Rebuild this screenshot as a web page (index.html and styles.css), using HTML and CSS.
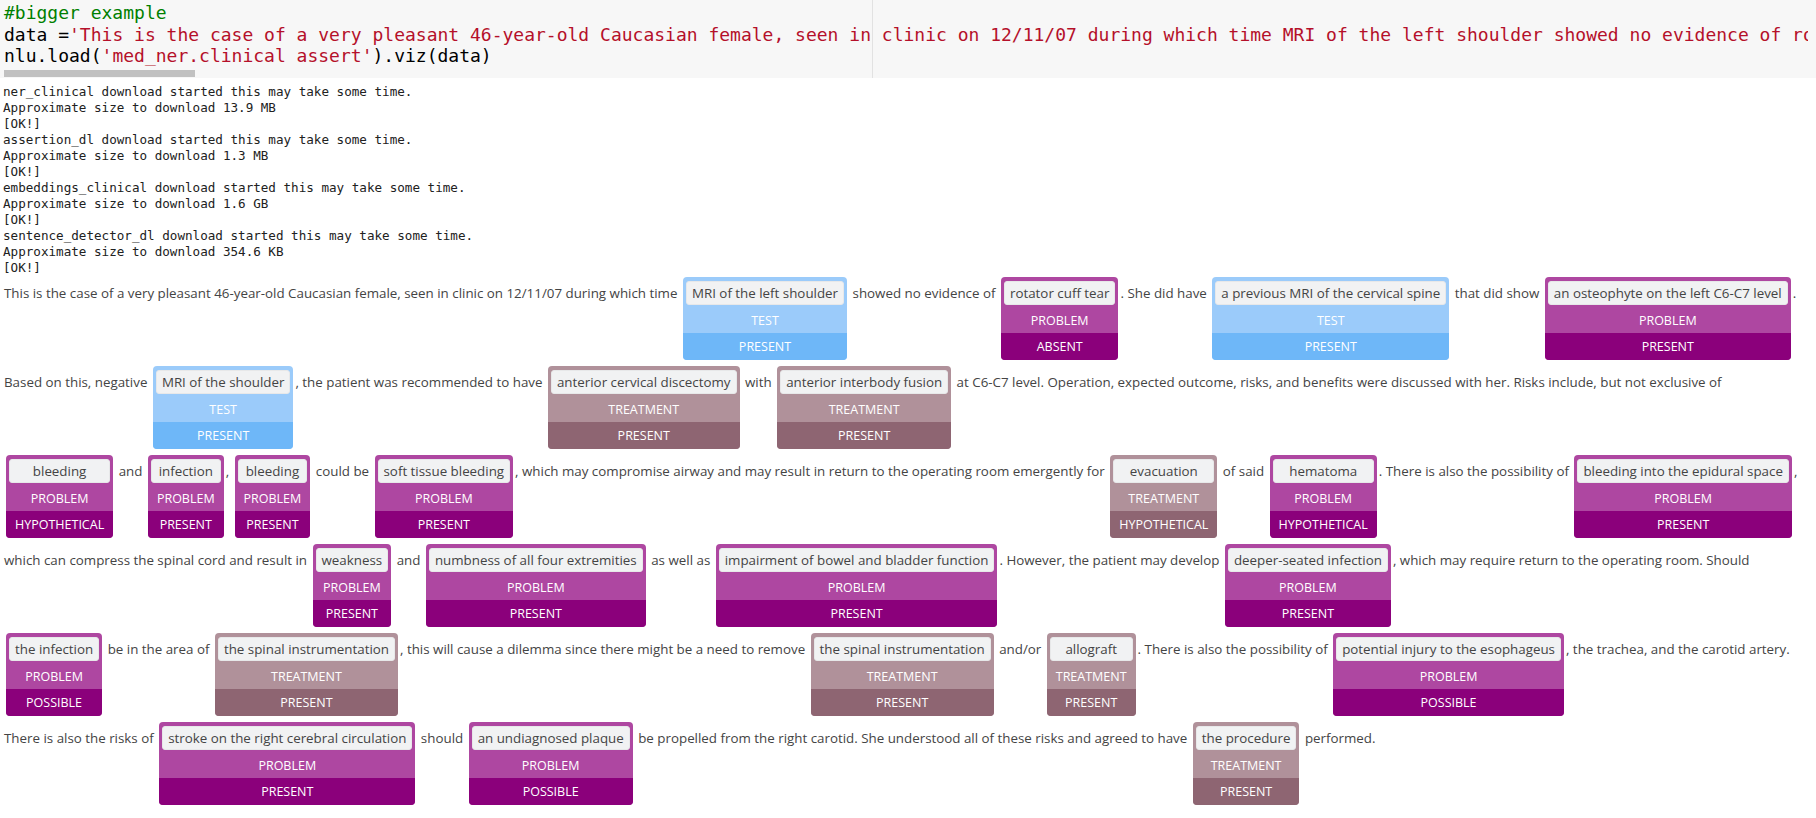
FILE: index.html
```html
<!DOCTYPE html>
<html>
<head>
<meta charset="utf-8">
<link rel="stylesheet" href="styles.css">
</head>
<body>
<div class="cell">
  <div class="code">
    <div class="cl"><span class="cm">#bigger example</span></div>
    <div class="cl">data =<span class="st">'This is the case of a very pleasant 46-year-old Caucasian female, seen in clinic on 12/11/07 during which time MRI of the left shoulder showed no evidence of rotator cuff tear. She did have a previous MRI of the cervical spine that did show an osteophyte on the left C6-C7 level.'</span></div>
    <div class="cl">nlu.load(<span class="st">'med_ner.clinical assert'</span>).viz(data)</div>
  </div>
  <div class="ruler"></div>
  <div class="scroll"><div class="thumb"></div></div>
</div>
<pre class="out">ner_clinical download started this may take some time.
Approximate size to download 13.9 MB
[OK!]
assertion_dl download started this may take some time.
Approximate size to download 1.3 MB
[OK!]
embeddings_clinical download started this may take some time.
Approximate size to download 1.6 GB
[OK!]
sentence_detector_dl download started this may take some time.
Approximate size to download 354.6 KB
[OK!]</pre>
<div class="viz">
<div class="line">This is the case of a very pleasant 46-year-old Caucasian female, seen in clinic on 12/11/07 during which time <span class="ent test"><span class="name">MRI of the left shoulder</span><span class="type">Test</span><span class="res">Present</span></span> showed no evidence of <span class="ent prob"><span class="name">rotator cuff tear</span><span class="type">Problem</span><span class="res">Absent</span></span>. She did have <span class="ent test"><span class="name">a previous MRI of the cervical spine</span><span class="type">Test</span><span class="res">Present</span></span> that did show <span class="ent prob"><span class="name">an osteophyte on the left C6-C7 level</span><span class="type">Problem</span><span class="res">Present</span></span>.</div>
<div class="line">Based on this, negative <span class="ent test"><span class="name">MRI of the shoulder</span><span class="type">Test</span><span class="res">Present</span></span>, the patient was recommended to have <span class="ent treat"><span class="name">anterior cervical discectomy</span><span class="type">Treatment</span><span class="res">Present</span></span> with <span class="ent treat"><span class="name">anterior interbody fusion</span><span class="type">Treatment</span><span class="res">Present</span></span> at C6-C7 level. Operation, expected outcome, risks, and benefits were discussed with her. Risks include, but not exclusive of</div>
<div class="line"><span class="ent prob"><span class="name">bleeding</span><span class="type">Problem</span><span class="res">Hypothetical</span></span> and <span class="ent prob"><span class="name">infection</span><span class="type">Problem</span><span class="res">Present</span></span>, <span class="ent prob"><span class="name">bleeding</span><span class="type">Problem</span><span class="res">Present</span></span> could be <span class="ent prob"><span class="name">soft tissue bleeding</span><span class="type">Problem</span><span class="res">Present</span></span>, which may compromise airway and may result in return to the operating room emergently for <span class="ent treat"><span class="name">evacuation</span><span class="type">Treatment</span><span class="res">Hypothetical</span></span> of said <span class="ent prob"><span class="name">hematoma</span><span class="type">Problem</span><span class="res">Hypothetical</span></span>. There is also the possibility of <span class="ent prob"><span class="name">bleeding into the epidural space</span><span class="type">Problem</span><span class="res">Present</span></span>,</div>
<div class="line">which can compress the spinal cord and result in <span class="ent prob"><span class="name">weakness</span><span class="type">Problem</span><span class="res">Present</span></span> and <span class="ent prob"><span class="name">numbness of all four extremities</span><span class="type">Problem</span><span class="res">Present</span></span> as well as <span class="ent prob"><span class="name">impairment of bowel and bladder function</span><span class="type">Problem</span><span class="res">Present</span></span>. However, the patient may develop <span class="ent prob"><span class="name">deeper-seated infection</span><span class="type">Problem</span><span class="res">Present</span></span>, which may require return to the operating room. Should</div>
<div class="line"><span class="ent prob"><span class="name">the infection</span><span class="type">Problem</span><span class="res">Possible</span></span> be in the area of <span class="ent treat"><span class="name">the spinal instrumentation</span><span class="type">Treatment</span><span class="res">Present</span></span>, this will cause a dilemma since there might be a need to remove <span class="ent treat"><span class="name">the spinal instrumentation</span><span class="type">Treatment</span><span class="res">Present</span></span> and/or <span class="ent treat"><span class="name">allograft</span><span class="type">Treatment</span><span class="res">Present</span></span>. There is also the possibility of <span class="ent prob"><span class="name">potential injury to the esophageus</span><span class="type">Problem</span><span class="res">Possible</span></span>, the trachea, and the carotid artery.</div>
<div class="line">There is also the risks of <span class="ent prob"><span class="name">stroke on the right cerebral circulation</span><span class="type">Problem</span><span class="res">Present</span></span> should <span class="ent prob"><span class="name">an undiagnosed plaque</span><span class="type">Problem</span><span class="res">Possible</span></span> be propelled from the right carotid. She understood all of these risks and agreed to have <span class="ent treat"><span class="name">the procedure</span><span class="type">Treatment</span><span class="res">Present</span></span> performed.</div>
</div>
</body>
</html>
```

FILE: styles.css
```css
html, body {
  margin: 0;
  padding: 0;
  background: #ffffff;
}

.cell {
  position: relative;
  background: #f7f7f7;
  height: 78px;
  overflow: hidden;
}

.code {
  padding: 2px 0 0 4px;
  margin-right: 8px;
  overflow: hidden;
  font-family: "DejaVu Sans Mono", monospace;
  font-size: 18px;
  line-height: 21.5px;
  color: #000000;
}

.cl {
  white-space: pre;
  height: 21.5px;
}

.cm { color: #008000; }
.st { color: #b5102a; }

.ruler {
  position: absolute;
  left: 872px;
  top: 0;
  width: 1px;
  height: 78px;
  background: #e2e2e2;
}

.scroll {
  position: absolute;
  left: 0;
  right: 0;
  top: 70px;
  height: 7px;
}

.thumb {
  margin-left: 4px;
  width: 191px;
  height: 7px;
  background: #c1c1c1;
}

.out {
  margin: 0;
  padding: 6px 0 0 3px;
  font-family: "DejaVu Sans Mono", monospace;
  font-size: 12.6px;
  line-height: 16px;
  color: #212121;
}

.viz {
  padding: 1px 0 0 4px;
}

.line {
  white-space: nowrap;
  font-family: "Open Sans", sans-serif;
  font-size: 13.35px;
  line-height: 24px;
  color: #444444;
}

.ent {
  display: inline-flex;
  flex-direction: column;
  vertical-align: baseline;
  text-align: center;
  border-radius: 4px;
  margin: 0 2px 6px;
  overflow: hidden;
}

.name {
  margin: 4px 3px 3px;
  padding: 0 5px;
  background: #f1f2f3;
  border: 1px solid #e7e8e9;
  border-radius: 3px;
  line-height: 22px;
  color: #444444;
}

.type, .res {
  padding: 0 9px;
  color: #ffffff;
  font-size: 12.5px;
  text-transform: uppercase;
}

.type {
  height: 25px;
  line-height: 25px;
}

.res {
  height: 27px;
  line-height: 27px;
}

.test { background: #9bcbfa; }
.test .res { background: #6eb7f8; }

.prob { background: #ae47a1; }
.prob .res { background: #8b007b; }

.treat { background: #b0919a; }
.treat .res { background: #8e6572; }
```
